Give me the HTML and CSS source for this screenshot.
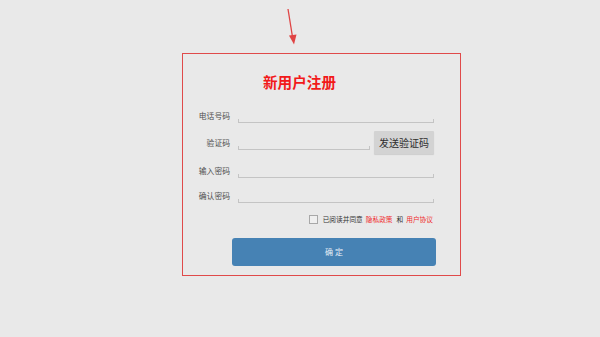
FILE: index.html
```html
<!DOCTYPE html>
<html lang="zh">
<head>
<meta charset="utf-8">
<title>新用户注册</title>
<link rel="stylesheet" href="styles.css">
</head>
<body>
<svg class="arrow" width="20" height="50" viewBox="0 0 20 50">
  <line x1="8" y1="9" x2="12.5" y2="37" stroke="#e04444" stroke-width="1.3"/>
  <polygon points="9,35.5 16.5,34.5 14,44.5" fill="#e04444"/>
</svg>
<div class="card">
  <div class="title">新用户注册</div>
  <div class="row row-1">
    <div class="label">电话号码</div>
    <div class="field"></div>
  </div>
  <div class="row row-2">
    <div class="label">验证码</div>
    <div class="field"></div>
    <div class="send">发送验证码</div>
  </div>
  <div class="row row-3">
    <div class="label">输入密码</div>
    <div class="field"></div>
  </div>
  <div class="row row-4">
    <div class="label">确认密码</div>
    <div class="field"></div>
  </div>
  <div class="agree">
    <span class="box"></span>
    <span class="txt">已阅读并同意</span>
    <span class="link">隐私政策</span>
    <span class="txt">和</span>
    <span class="link">用户协议</span>
  </div>
  <div class="submit">确 定</div>
</div>
</body>
</html>
```
FILE: styles.css
```css
html, body {
  margin: 0;
  padding: 0;
}
body {
  width: 600px;
  height: 337px;
  background: #e9e9e9;
  font-family: "Noto Sans CJK SC", "Noto Sans", sans-serif;
  position: relative;
  overflow: hidden;
  padding-top: 53px;
  box-sizing: border-box;
}
.arrow {
  position: absolute;
  left: 280px;
  top: 0;
}
.card {
  margin-left: 182px;
  width: 279px;
  height: 223px;
  box-sizing: border-box;
  border: 1px solid #e04a4a;
  display: flex;
  flex-direction: column;
}
.title {
  margin-top: 20px;
  margin-left: 80px;
  height: 16px;
  line-height: 16px;
  font-size: 14.6px;
  font-weight: bold;
  color: #f21a1a;
}
.row {
  display: flex;
  align-items: center;
  padding-right: 26px;
}
.row-1 { margin-top: 19px; }
.row-2 { margin-top: 8px; }
.row-3 { margin-top: 10px; }
.row-4 { margin-top: 11px; }
.label {
  width: 47px;
  flex: none;
  text-align: right;
  font-size: 7.8px;
  line-height: 14px;
  color: #4f4f4f;
}
.field {
  flex: 1;
  margin-left: 8px;
  height: 14px;
  box-sizing: border-box;
  position: relative;
  border-bottom: 1px solid #c4c4c4;
}
.field::before,
.field::after {
  content: "";
  position: absolute;
  bottom: 0;
  width: 1px;
  height: 3px;
  background: #c4c4c4;
}
.field::before { left: 0; }
.field::after { right: 0; }
.send {
  flex: none;
  margin-left: 4px;
  width: 60px;
  height: 23px;
  background: #d3d3d3;
  color: #2e2e2e;
  font-size: 10px;
  line-height: 23px;
  text-align: center;
  border-radius: 1px;
  box-shadow: 0 1px 1px rgba(0,0,0,0.12);
}
.agree {
  margin-top: 10px;
  height: 13px;
  display: flex;
  align-items: center;
  justify-content: flex-end;
  padding-right: 27px;
  font-size: 6.7px;
  line-height: 13px;
}
.box {
  width: 9px;
  height: 9px;
  box-sizing: border-box;
  border: 1px solid #a8a8a8;
  background: #efefef;
  margin-right: 5px;
}
.txt {
  color: #333;
  margin-right: 3px;
}
.link {
  color: #f02a2a;
  margin-right: 4px;
}
.link:last-child { margin-right: 0; }
.submit {
  margin-top: 12px;
  margin-left: 49px;
  margin-right: 24px;
  height: 28px;
  line-height: 28px;
  background: #4682b4;
  border-radius: 3px;
  color: #e6eef6;
  text-align: center;
  font-size: 8px;
}
```
